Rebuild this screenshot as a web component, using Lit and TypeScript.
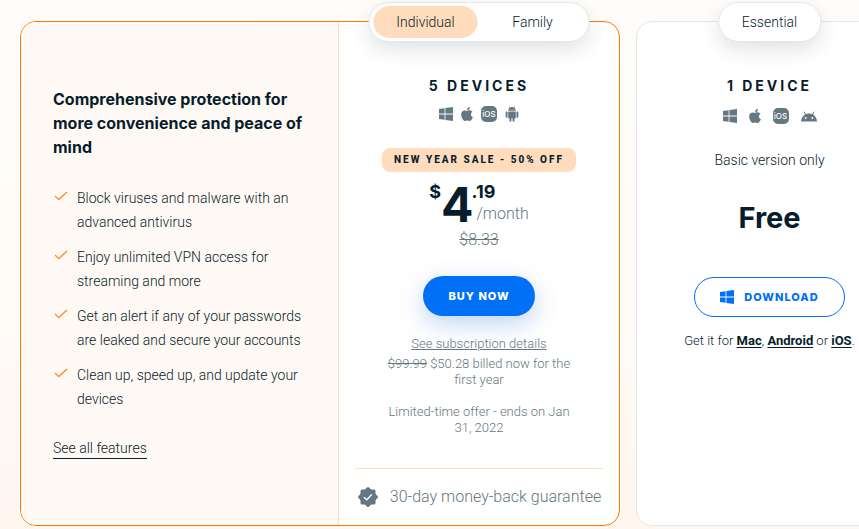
import { LitElement, html, css } from 'lit';
import { customElement, state } from 'lit/decorators.js';

const windowsIcon = html`<svg class="icon win" viewBox="0 0 14 14" aria-hidden="true">
  <path fill="currentColor" d="M0 2 5.600 1.200V6.500H0zM6.400 1.100 14 0V6.500H6.400zM0 7.500H5.600V12.800L0 12zM6.400 7.500H14V14L6.400 12.900z" />
</svg>`;

const appleIcon = html`<svg class="icon apple" viewBox="0 0 384 512" aria-hidden="true">
  <path fill="currentColor" d="M318.700 268.700c-.2-36.700 16.400-64.400 50-84.800-18.800-26.900-47.200-41.700-84.700-44.600-35.500-2.800-74.300 20.700-88.500 20.700-15 0-49.400-19.700-76.400-19.700C63.300 141.200 4 184.800 4 273.500q0 39.300 14.400 81.200c12.800 36.700 59 126.700 107.200 125.200 25.200-.6 43-17.900 75.800-17.900 31.800 0 48.300 17.900 76.400 17.900 48.600-.7 90.400-82.500 102.600-119.300-65.200-30.700-61.700-90-61.700-91.900zm-56.600-164.200c27.300-32.400 24.800-61.900 24-72.500-24.100 1.400-52 16.400-67.900 34.900-17.500 19.800-27.800 44.300-25.600 71.900 26.100 2 49.900-11.400 69.500-34.300z" />
</svg>`;

const iosIcon = html`<span class="ios">iOS</span>`;

const robotIcon = html`<svg class="icon robot" viewBox="1 0 22 24" aria-hidden="true">
  <path fill="currentColor" d="M6 18c0 .55.45 1 1 1h1v3.500c0 .83.67 1.500 1.500 1.500s1.500-.67 1.500-1.500V19h2v3.500c0 .83.67 1.500 1.500 1.500s1.500-.67 1.500-1.500V19h1c.55 0 1-.45 1-1V8H6v10zM3.500 8C2.670 8 2 8.670 2 9.500v7c0 .83.67 1.500 1.500 1.500S5 17.330 5 16.500v-7C5 8.670 4.330 8 3.500 8zm17 0c-.83 0-1.500.67-1.500 1.500v7c0 .83.67 1.500 1.500 1.500s1.500-.67 1.500-1.500v-7c0-.83-.67-1.500-1.500-1.500zm-4.970-5.840l1.300-1.300c.2-.2.2-.51 0-.71-.2-.2-.51-.2-.71 0l-1.480 1.480C13.850 1.230 12.950 1 12 1c-.96 0-1.860.23-2.660.63L7.850.15c-.2-.2-.51-.2-.71 0-.2.2-.2.51 0 .71l1.310 1.310C6.970 3.260 6 5.010 6 7h12c0-1.990-.97-3.750-2.470-4.840zM10 5H9V4h1v1zm5 0h-1V4h1v1z" />
</svg>`;

const droidHeadIcon = html`<svg class="icon droid" viewBox="0 0 16 11" aria-hidden="true">
  <path fill="currentColor" fill-rule="evenodd" d="M0 11C.2 8 1.600 5.400 4 4L2.500 1.300 3.200.9 4.800 3.600C6.800 2.700 9.200 2.700 11.200 3.600L12.800.9 13.500 1.300 12 4C14.400 5.400 15.800 8 16 11zM4.600 6.600a.9.9 0 1 0 0 1.800.9.9 0 0 0 0-1.800zM11.400 6.600a.9.9 0 1 0 0 1.800.9.9 0 0 0 0-1.800z" />
</svg>`;

const sealIcon = html`<svg class="seal" viewBox="0 0 22 22" aria-hidden="true">
  <g fill="currentColor">
    <rect x="3.500" y="3.500" width="15" height="15" rx="1.500" />
    <rect x="3.500" y="3.500" width="15" height="15" rx="1.500" transform="rotate(45 11 11)" />
  </g>
  <path d="M7 11.200 9.700 13.700 14.800 8.500" fill="none" stroke="#fff" stroke-width="1.500" />
</svg>`;

const tickIcon = html`<svg class="tick" viewBox="0 0 14 10" aria-hidden="true">
  <path d="M1 5 4.800 8.600 13 1" fill="none" stroke="currentColor" stroke-width="1.300" />
</svg>`;

const FEATURES = [
  'Block viruses and malware with an advanced antivirus',
  'Enjoy unlimited VPN access for streaming and more',
  'Get an alert if any of your passwords are leaked and secure your accounts',
  'Clean up, speed up, and update your devices',
];

@customElement('app-root')
export class AppRoot extends LitElement {
  @state() private plan = 'Individual';

  static styles = css`
    :host {
      display: block;
      min-height: 100vh;
      overflow: hidden;
      box-sizing: border-box;
      background: linear-gradient(#fffdf9, #fffcf8 50%, #fff6f0);
      color: #071d2b;
      font: 300 14px/24px Roboto, 'Liberation Sans', sans-serif;
    }
    * { box-sizing: border-box; }
    h2, h3, p, ul { margin: 0; padding: 0; }
    a { color: inherit; }
    button { font: inherit; color: inherit; border: 0; background: none; padding: 0; cursor: pointer; }
    .plans {
      display: grid;
      grid-template-columns: 600fr 267fr;
      gap: 16px;
      width: calc(100% + 44px);
      padding: 21px 0 3px 20px;
    }
    .card { border: 1px solid #e3e7ea; border-radius: 16px; background: #fff; }
    .main {
      display: grid;
      grid-template-columns: 318fr 280fr;
      border-color: #ff7800;
    }
    .about {
      padding: 65px 32px 64px;
      border-right: 1px solid #ffdcbd;
      border-radius: 15px 0 0 15px;
      background: #fff9f5;
    }
    .about h2 { font: 700 16px/24px Inter, sans-serif; margin-right: -8px; }
    ul { list-style: none; display: grid; gap: 11px; margin: 27px 0 25px; }
    li { display: flex; gap: 9px; }
    .tick { flex: none; width: 14px; height: 10px; margin: 5px 0 0 1px; color: #ff8a24; }
    .all { display: inline-block; line-height: 20px; text-decoration: none; border-bottom: 1px solid #071d2b; }
    .offer {
      position: relative;
      display: flex;
      flex-direction: column;
      align-items: center;
      padding: 52px 16px 0;
      text-align: center;
    }
    .pill {
      position: absolute;
      top: -20px;
      left: 50%;
      transform: translateX(-50%);
      display: flex;
      gap: 3px;
      height: 40px;
      padding: 3px 4px;
      border: 1px solid #e3e7ea;
      border-radius: 20px;
      background: #fff;
      box-shadow: 0 8px 20px rgba(7, 29, 43, 0.12);
    }
    .pill button { width: 104px; border-radius: 16px; }
    .pill .on { background: #ffdcbd; }
    .label { padding: 0 23px; line-height: 32px; align-items: center; }
    h3 { font: 700 14px/24px Inter, sans-serif; letter-spacing: 3px; }
    .systems { display: flex; align-items: center; height: 16px; margin-top: 8px; gap: 8px; color: #657780; }
    .wide { margin-top: 10px; gap: 12px; }
    .icon { flex: none; display: block; }
    .win { width: 14px; height: 14px; }
    .apple { width: 12px; height: 16px; }
    .robot { width: 14px; height: 16px; }
    .droid { width: 16px; height: 12px; }
    .ios {
      width: 16px;
      height: 16px;
      border-radius: 5px;
      background: #657780;
      color: #fff;
      font: 500 8px/16px Inter, sans-serif;
      text-align: center;
    }
    .sale {
      margin-top: 26px;
      padding: 0 12px;
      border-radius: 8px;
      background: #ffdcbd;
      font-size: 10px;
      font-weight: 800;
      letter-spacing: 2px;
      white-space: nowrap;
    }
    .price { display: flex; height: 56px; font-family: Inter, sans-serif; font-weight: 700; }
    .sup { font-size: 18px; line-height: 40px; }
    .whole { font-size: 48px; line-height: 66px; margin-right: -2px; }
    .rest { display: flex; flex-direction: column; align-items: flex-start; }
    .rest .sup { height: 30px; }
    .month { font: 300 16px/24px Roboto, sans-serif; color: #657780; padding-left: 5px; }
    .was { font-size: 16px; line-height: 24px; color: #657780; }
    .cta {
      height: 40px;
      border-radius: 20px;
      font: 800 11px/40px Inter, sans-serif;
      letter-spacing: 1px;
    }
    .buy {
      margin-top: 24px;
      padding: 0 25px;
      background: #0070f6;
      color: #fff;
      box-shadow: 0 8px 24px rgba(0, 88, 210, 0.25);
    }
    .fine { max-width: 192px; margin-top: 20px; font-size: 13px; line-height: 16px; color: #657780; }
    .fine p { margin-top: 4px; }
    .fine p + p { margin-top: 16px; }
    .back {
      display: flex;
      align-items: center;
      align-self: stretch;
      justify-content: center;
      gap: 11px;
      margin-top: 32px;
      padding: 16px 0;
      border-top: 1px solid #ffdcbd;
      color: #657780;
      font-size: 16px;
      white-space: nowrap;
    }
    .seal { width: 22px; height: 22px; }
    .free { font: 700 29px/40px Inter, sans-serif; margin: 26px 0 39px; }
    .download {
      display: flex;
      align-items: center;
      gap: 10px;
      padding: 0 25px;
      border: 1px solid #0070f6;
      color: #0070f6;
    }
    .basic { margin-top: 24px; }
    .get { margin-top: 12px; font-size: 13px; white-space: nowrap; }
    .get a { font-weight: 700; text-underline-offset: 2px; }
  `;

  render() {
    return html`
      <main class="plans">
        <section class="card main">
          <div class="about">
            <h2>Comprehensive protection for more convenience and peace of mind</h2>
            <ul>
              ${FEATURES.map((text) => html`<li>${tickIcon}<span>${text}</span></li>`)}
            </ul>
            <a class="all" href="#features">See all features</a>
          </div>
          <div class="offer">
            <div class="pill">
              ${['Individual', 'Family'].map(
                (name) => html`<button
                  class=${this.plan === name ? 'on' : ''}
                  aria-pressed=${this.plan === name}
                  @click=${() => (this.plan = name)}
                >${name}</button>`,
              )}
            </div>
            <h3>5 DEVICES</h3>
            <div class="systems">${windowsIcon}${appleIcon}${iosIcon}${robotIcon}</div>
            <div class="sale">NEW YEAR SALE - 50% OFF</div>
            <div class="price">
              <span class="sup">$</span><span class="whole">4</span>
              <span class="rest"><span class="sup">.19</span><span class="month">/month</span></span>
            </div>
            <s class="was">$8.33</s>
            <button class="cta buy">BUY NOW</button>
            <div class="fine">
              <a href="#details">See subscription details</a>
              <p><s>$99.99</s> $50.28 billed now for the first year</p>
              <p>Limited-time offer - ends on Jan 31, 2022</p>
            </div>
            <div class="back">${sealIcon}<span>30-day money-back guarantee</span></div>
          </div>
        </section>
        <section class="card offer">
          <div class="pill label">Essential</div>
          <h3>1 DEVICE</h3>
          <div class="systems wide">${windowsIcon}${appleIcon}${iosIcon}${droidHeadIcon}</div>
          <p class="basic">Basic version only</p>
          <p class="free">Free</p>
          <button class="cta download">${windowsIcon}DOWNLOAD</button>
          <p class="get">
            Get it for <a href="#mac">Mac</a>, <a href="#android">Android</a> or <a href="#ios">iOS</a>.
          </p>
        </section>
      </main>
    `;
  }
}
